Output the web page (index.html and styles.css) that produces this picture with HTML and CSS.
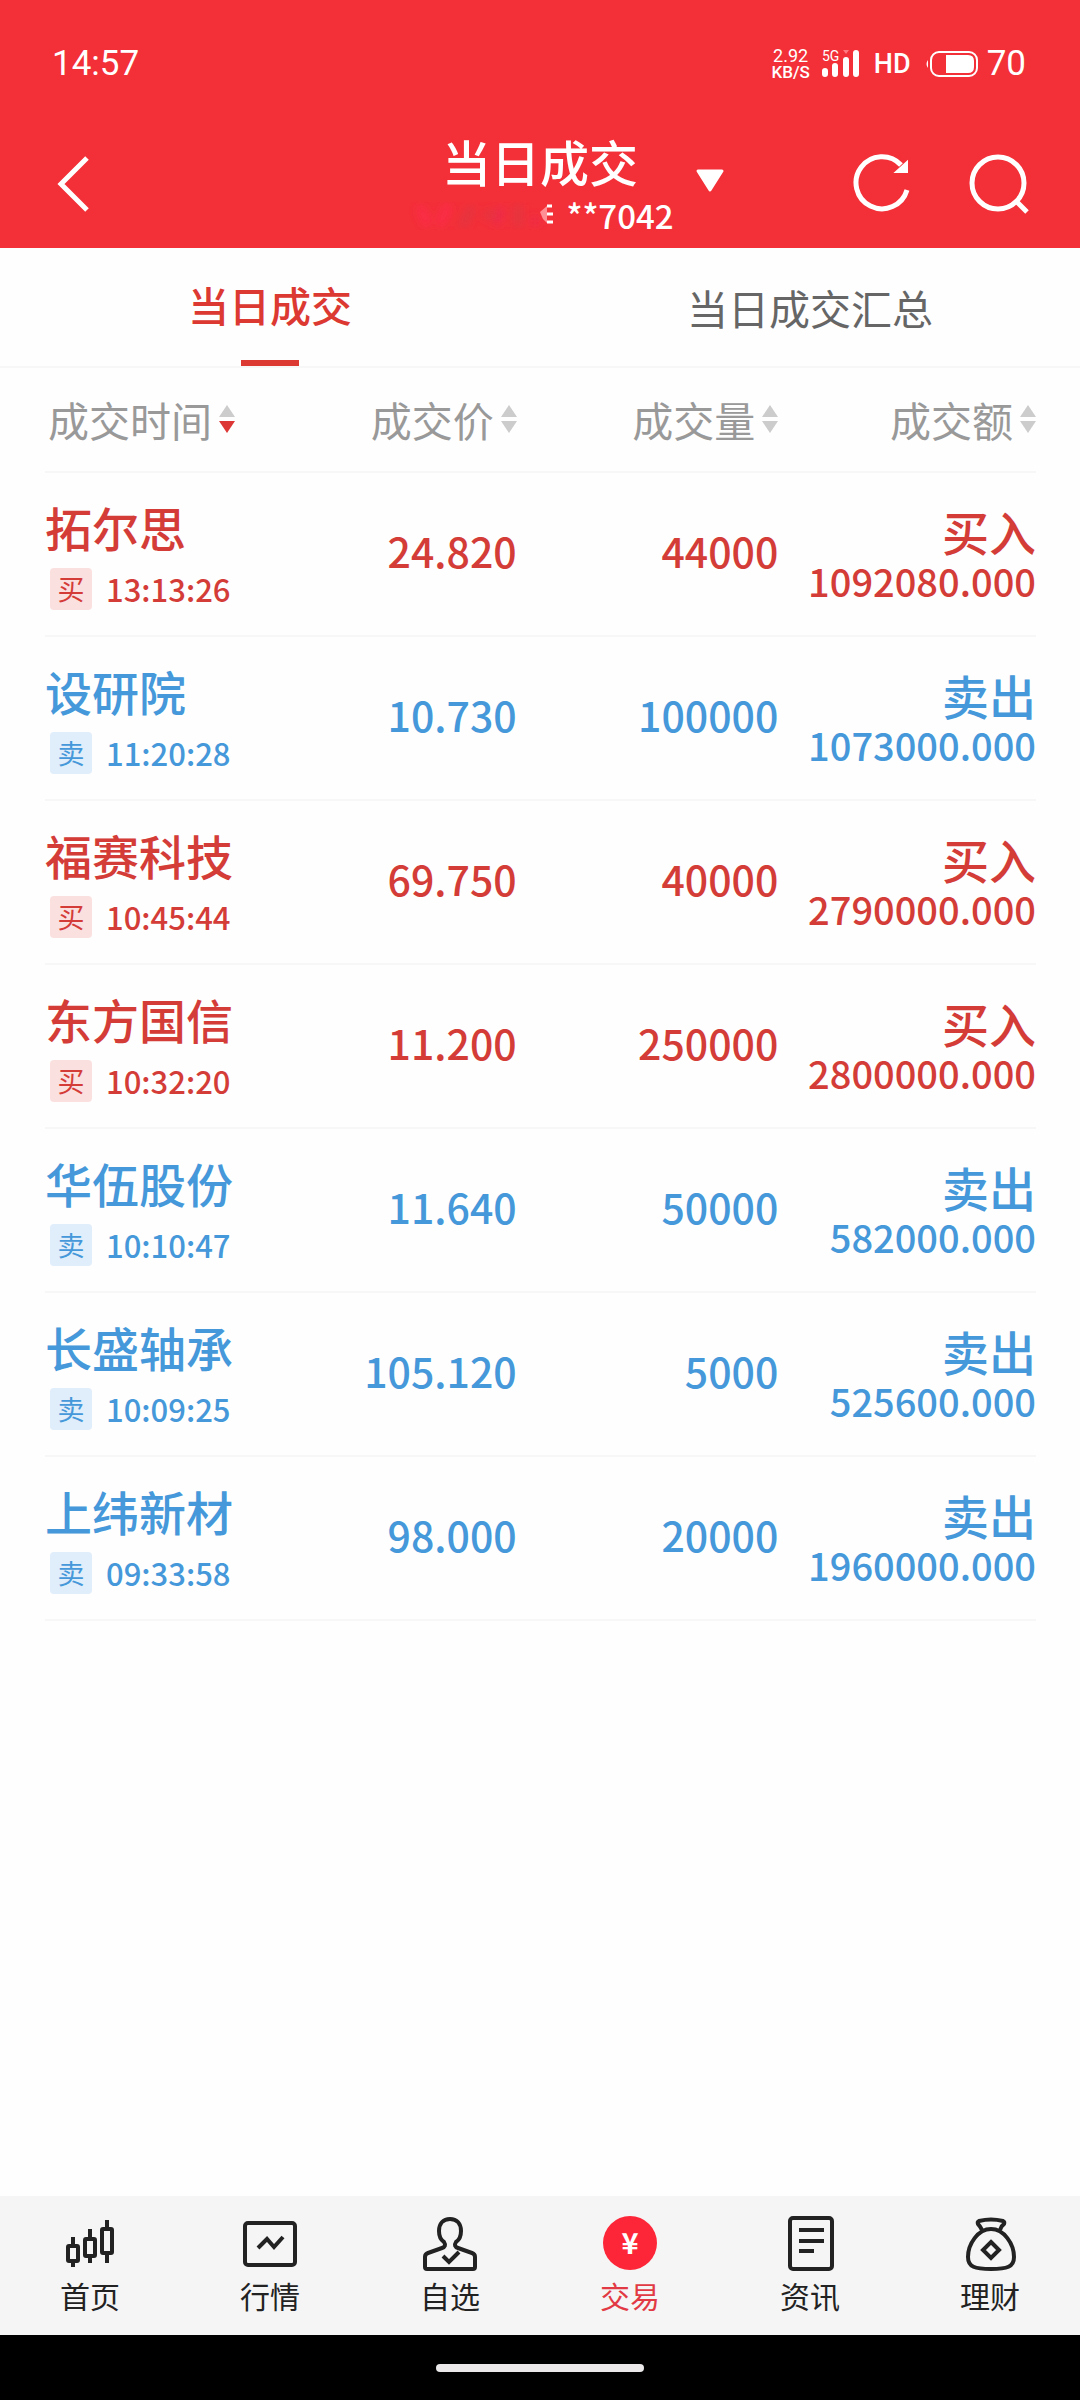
FILE: index.html
```html
<!DOCTYPE html>
<html lang="zh-CN">
  <head>
    <meta charset="UTF-8" />
    <meta name="viewport" content="width=device-width, initial-scale=1.0" />
    <title>当日成交</title>
    <link rel="stylesheet" href="styles.css">
  </head>
  <body>
    <header class="header">
      <div class="status-bar">
        <span class="clock">14:57</span>
        <div class="status-right">
          <div class="net-speed"><span>2.92</span><span class="unit">KB/S</span></div>
          <svg class="signal" viewBox="0 0 38 30">
            <text x="0" y="12" class="signal-text">5G</text>
            <g stroke="#fff" stroke-width="6" stroke-linecap="round">
              <path d="M3 22v3M13 17v8M24 11v14M34 4v21" />
            </g>
            <path d="M21 1h6l-3 4z" fill="#ff7a80" />
          </svg>
          <span class="hd">HD</span>
          <svg class="battery" viewBox="0 0 54 28">
            <path d="M3 10q-3 4 0 8z" fill="#fff" />
            <rect x="6" y="2" width="46" height="24" rx="8" fill="none" stroke="#fff" stroke-width="2" />
            <path d="M21 5h22q6 0 6 6v6q0 6-6 6H21z" fill="#fff" />
          </svg>
          <span class="battery-level">70</span>
        </div>
      </div>
      <div class="title-bar">
        <button class="icon-button back" aria-label="返回">
          <svg viewBox="0 0 34 58"><path d="M31 3L5 29l26 26" /></svg>
        </button>
        <div class="title">
          <h1>当日成交</h1>
          <div class="account">
            <svg class="account-name" viewBox="0 0 150 40">
              <defs><filter id="soft"><feGaussianBlur stdDeviation="4" /></filter></defs>
              <g filter="url(#soft)" fill="none" stroke-width="8">
                <path d="M14 12l8 18M42 10l-8 20" stroke="#fd2b4c" />
                <path d="M66 12l-10 20M78 20h20M112 10v22" stroke="#e23640" />
                <path d="M96 12l-6 18M124 26h10" stroke="#ee2b4c" />
              </g>
              <path d="M134 17l7-6v17l-4-4z" fill="#ff8f94" />
              <path d="M141 11h5M141 19h6M141 27h6" stroke="#fff" stroke-width="3" />
            </svg>
            <span>**7042</span>
          </div>
        </div>
        <button class="icon-button dropdown" aria-label="切换账户">
          <svg viewBox="0 0 30 24"><path d="M3 2h24L15 21z" /></svg>
        </button>
        <div class="actions">
          <button class="icon-button action" aria-label="刷新">
            <svg viewBox="0 0 62 62">
              <path d="M49 12A26 26 0 1 0 55 37" />
              <path class="solid" d="M55 9v10H44z" />
            </svg>
          </button>
          <button class="icon-button action" aria-label="搜索">
            <svg viewBox="0 0 62 62">
              <circle cx="30" cy="30" r="26" />
              <path d="M48 48l11 11" />
            </svg>
          </button>
        </div>
      </div>
    </header>

    <nav class="tabs">
      <a href="#" class="tab active">当日成交</a>
      <a href="#" class="tab">当日成交汇总</a>
    </nav>

    <main class="content">
      <table class="deals">
        <thead>
          <tr>
            <th><button class="sort desc">成交时间<svg viewBox="0 0 16 28"><path d="M8 0l8 12H0z" /><path class="down" d="M8 28l8-12H0z" /></svg></button></th>
            <th><button class="sort">成交价<svg viewBox="0 0 16 28"><path d="M8 0l8 12H0z" /><path class="down" d="M8 28l8-12H0z" /></svg></button></th>
            <th><button class="sort">成交量<svg viewBox="0 0 16 28"><path d="M8 0l8 12H0z" /><path class="down" d="M8 28l8-12H0z" /></svg></button></th>
            <th><button class="sort">成交额<svg viewBox="0 0 16 28"><path d="M8 0l8 12H0z" /><path class="down" d="M8 28l8-12H0z" /></svg></button></th>
          </tr>
        </thead>
        <tbody>
          <tr class="buy">
            <td><div class="name">拓尔思</div><div class="time"><span class="badge">买</span>13:13:26</div></td>
            <td>24.820</td>
            <td>44000</td>
            <td><div class="side">买入</div><div class="amount">1092080.000</div></td>
          </tr>
          <tr class="sell">
            <td><div class="name">设研院</div><div class="time"><span class="badge">卖</span>11:20:28</div></td>
            <td>10.730</td>
            <td>100000</td>
            <td><div class="side">卖出</div><div class="amount">1073000.000</div></td>
          </tr>
          <tr class="buy">
            <td><div class="name">福赛科技</div><div class="time"><span class="badge">买</span>10:45:44</div></td>
            <td>69.750</td>
            <td>40000</td>
            <td><div class="side">买入</div><div class="amount">2790000.000</div></td>
          </tr>
          <tr class="buy">
            <td><div class="name">东方国信</div><div class="time"><span class="badge">买</span>10:32:20</div></td>
            <td>11.200</td>
            <td>250000</td>
            <td><div class="side">买入</div><div class="amount">2800000.000</div></td>
          </tr>
          <tr class="sell">
            <td><div class="name">华伍股份</div><div class="time"><span class="badge">卖</span>10:10:47</div></td>
            <td>11.640</td>
            <td>50000</td>
            <td><div class="side">卖出</div><div class="amount">582000.000</div></td>
          </tr>
          <tr class="sell">
            <td><div class="name">长盛轴承</div><div class="time"><span class="badge">卖</span>10:09:25</div></td>
            <td>105.120</td>
            <td>5000</td>
            <td><div class="side">卖出</div><div class="amount">525600.000</div></td>
          </tr>
          <tr class="sell">
            <td><div class="name">上纬新材</div><div class="time"><span class="badge">卖</span>09:33:58</div></td>
            <td>98.000</td>
            <td>20000</td>
            <td><div class="side">卖出</div><div class="amount">1960000.000</div></td>
          </tr>
        </tbody>
      </table>
    </main>

    <nav class="bottom-nav">
      <a href="#" class="nav-item">
        <svg viewBox="0 0 56 56">
          <rect x="6" y="31" width="10" height="15" rx="1" />
          <rect x="23" y="24" width="10" height="17" rx="1" />
          <rect x="40" y="14" width="10" height="24" rx="1" />
          <path d="M11 22v9M11 46v6M28 14v10M28 41v7M45 5v9M45 38v10" />
        </svg>
        <span>首页</span>
      </a>
      <a href="#" class="nav-item">
        <svg viewBox="0 0 56 56">
          <rect x="3" y="8" width="50" height="42" rx="3" />
          <path d="M16 33l9-9 7 8 9-10" />
        </svg>
        <span>行情</span>
      </a>
      <a href="#" class="nav-item">
        <svg viewBox="0 0 56 56">
          <path d="M28 4c-7 0-11 5-11 12 0 5 2 9 5 11 2 3 1 5-2 6L6 38q-3 1-3 4v10q0 2 2 2h46q2 0 2-2V42q0-3-3-4l-14-5c-3-1-4-3-2-6 3-2 5-6 5-11 0-7-4-12-11-12z" />
          <path d="M21 41l6 6 10-10" />
        </svg>
        <span>自选</span>
      </a>
      <a href="#" class="nav-item active">
        <svg viewBox="0 0 56 56">
          <circle cx="28" cy="28" r="27" />
          <text x="28" y="39" text-anchor="middle">¥</text>
        </svg>
        <span>交易</span>
      </a>
      <a href="#" class="nav-item">
        <svg viewBox="0 0 56 56">
          <rect x="8" y="3" width="42" height="51" rx="3" />
          <path d="M17 15h25M17 26h25M17 36h15" />
        </svg>
        <span>资讯</span>
      </a>
      <a href="#" class="nav-item">
        <svg viewBox="0 0 56 56">
          <path d="M20 15q-2-4-4-6-1-2 1-3 12-3 24 0 2 1 1 3-3 2-4 6" />
          <path d="M29 14C16 14 6 29 6 42c0 10 7 12 23 12s23-2 23-12C52 29 42 14 29 14z" />
          <path d="M29 27l8 8-8 8-8-8z" />
        </svg>
        <span>理财</span>
      </a>
    </nav>
    <div class="home-bar"><div class="home-handle"></div></div>
  </body>
</html>
```
FILE: styles.css
```css
* {
  box-sizing: border-box;
}

body {
  margin: 0;
  min-height: 100vh;
  display: flex;
  flex-direction: column;
  background: #fefefe;
  font-family: "Noto Sans CJK SC", sans-serif;
}

a {
  text-decoration: none;
}

button {
  padding: 0;
  border: none;
  background: none;
  font-family: inherit;
  cursor: pointer;
}

svg {
  display: block;
}

/* header */
.header {
  background: #f32f38;
  color: #fff;
}

.status-bar {
  display: flex;
  justify-content: space-between;
  align-items: center;
  height: 127px;
  padding: 0 54px 0 52px;
  font-family: Roboto, sans-serif;
}

.clock,
.battery-level {
  font-size: 35px;
}

.status-right {
  display: flex;
  align-items: center;
}

.net-speed {
  display: flex;
  flex-direction: column;
  align-items: center;
  margin-right: 12px;
  font-size: 18px;
  line-height: 17px;
}

.net-speed .unit {
  font-size: 17px;
  font-weight: 500;
}

.signal {
  width: 38px;
  height: 30px;
  margin-right: 14px;
  overflow: visible;
}

.signal-text {
  font-size: 14px;
  fill: #fff;
}

.hd {
  margin-right: 14px;
  font-size: 27px;
  font-weight: 500;
}

.battery {
  width: 54px;
  height: 28px;
  margin-right: 8px;
}

.title-bar {
  display: grid;
  grid-template-columns: 1fr auto 1fr;
  align-items: center;
  height: 121px;
  position: relative;
  padding: 0 50px 12px;
}

.icon-button svg {
  fill: none;
  stroke: #fff;
  stroke-width: 5;
}

.back {
  width: 34px;
  margin-left: 6px;
}

.title {
  padding-top: 6px;
  text-align: center;
}

.title h1 {
  margin: 0;
  font-size: 49px;
  font-weight: 500;
  line-height: 56px;
}

.account {
  display: flex;
  justify-content: center;
  align-items: center;
  font-size: 33px;
  font-weight: 500;
  line-height: 52px;
}

.account-name {
  width: 150px;
  height: 40px;
  margin-right: 10px;
}

.dropdown {
  position: absolute;
  top: 42px;
  left: calc(50% + 155px);
}

.dropdown svg {
  width: 30px;
  height: 24px;
  fill: #fff;
  stroke-width: 3;
  stroke-linejoin: round;
}

.actions {
  display: flex;
  justify-content: flex-end;
  gap: 54px;
}

.action {
  width: 62px;
}

.action .solid {
  fill: #fff;
  stroke-width: 2;
}

/* tabs */
.tabs {
  display: flex;
  height: 120px;
  border-bottom: 2px solid #f7f7f7;
}

.tab {
  flex: 1;
  display: flex;
  flex-direction: column;
  align-items: center;
  justify-content: space-between;
  padding-top: 30px;
  color: #666;
  font-size: 41px;
  line-height: 58px;
}

.tab.active {
  padding-top: 27px;
  color: #dc3932;
  font-weight: 500;
}

.tab.active::after {
  content: "";
  width: 58px;
  height: 6px;
  background: #dc3932;
}

/* deals */
.content {
  flex: 1;
  padding: 0 44px 0 45px;
}

.deals {
  width: 100%;
  table-layout: fixed;
  border-collapse: separate;
  border-spacing: 0;
  white-space: nowrap;
}

.deals th,
.deals td {
  padding: 0;
  border-bottom: 2px solid #f7f7f7;
  text-align: right;
}

.deals th:first-child,
.deals td:first-child {
  text-align: left;
}

.deals th:nth-child(1) {
  width: 24%;
}

.deals th:nth-child(2) {
  width: 24%;
}

.deals th:nth-child(3) {
  width: 26%;
}

.deals th {
  height: 105px;
  padding-bottom: 2px;
}

.deals th:nth-child(2),
.deals td:nth-child(2) {
  padding-right: 4px;
}

.sort {
  display: inline-flex;
  align-items: center;
  gap: 7px;
  color: #999;
  font-size: 41px;
  line-height: 58px;
}

th:first-child .sort {
  padding-left: 3px;
}

.sort svg {
  width: 16px;
  height: 28px;
  fill: #ccc;
}

.sort.desc .down {
  fill: #dd3735;
}

.deals td {
  height: 164px;
  font-size: 41px;
  font-weight: 500;
}

.deals td:nth-child(2),
.deals td:nth-child(3) {
  padding-bottom: 8px;
}

.deals td:last-child {
  padding-top: 3px;
}

.buy {
  color: #d43c38;
}

.sell {
  color: #4598d9;
}

.name,
.side {
  font-size: 47px;
  line-height: 58px;
}

.time {
  display: flex;
  align-items: center;
  gap: 14px;
  padding-left: 5px;
  margin-top: 12px;
  font-size: 31px;
  line-height: 42px;
}

.badge {
  width: 42px;
  height: 42px;
  border-radius: 4px;
  background: #fbe0e0;
  font-size: 27px;
  font-weight: 400;
  line-height: 42px;
  text-align: center;
}

.sell .badge {
  background: #e0edfa;
}

.side {
  line-height: 50px;
}

.amount {
  font-size: 38px;
  line-height: 50px;
}

/* bottom navigation */
.bottom-nav {
  display: flex;
  height: 139px;
  padding-top: 19px;
  background: #f5f5f5;
}

.nav-item {
  flex: 1;
  display: flex;
  flex-direction: column;
  align-items: center;
  gap: 3px;
  color: #222;
  font-size: 30px;
  line-height: 42px;
}

.nav-item svg {
  width: 56px;
  height: 56px;
  fill: none;
  stroke: #222;
  stroke-width: 4;
}

.nav-item.active {
  color: #e23a44;
}

.nav-item.active svg {
  fill: #fd2638;
  stroke: none;
}

.nav-item.active text {
  fill: #fff;
  font-size: 29px;
  font-weight: bold;
}

.home-bar {
  display: flex;
  justify-content: center;
  align-items: center;
  height: 65px;
  background: #000;
}

.home-handle {
  width: 208px;
  height: 8px;
  border-radius: 4px;
  background: #ebe9e9;
}
```
